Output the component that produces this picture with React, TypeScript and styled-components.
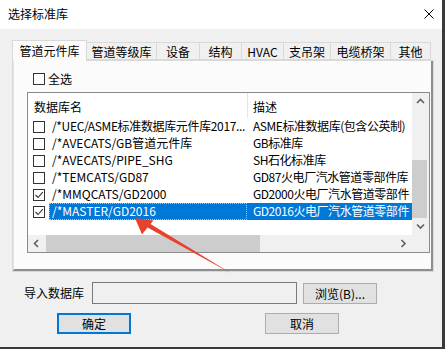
import React from 'react';
import styled, { createGlobalStyle } from 'styled-components';

const GlobalStyle = createGlobalStyle`
  html, body {
    margin: 0;
    padding: 0;
    background: #f0f0f0;
  }
  body {
    font-family: "Noto Sans CJK SC", "Noto Sans", sans-serif;
    font-size: 12px;
    color: #000;
  }
`;

const Window = styled.div`
  position: relative;
  width: 445px;
  height: 349px;
  box-sizing: border-box;
  background: #f0f0f0;
  border-right: 3px solid #3a3a3a;
  border-bottom: 2px solid #3a3a3a;
  overflow: hidden;
`;

const TitleBar = styled.div`
  height: 29px;
  background: #fff;
  display: flex;
  align-items: center;
  padding: 0 8px 2px 8px;
  box-sizing: border-box;
`;

const Title = styled.span`
  font-size: 12px;
  line-height: 14px;
`;

const CloseIcon = styled.svg`
  margin-left: auto;
  width: 10px;
  height: 10px;
`;

const Body = styled.div`
  padding: 11px 0 0 12px;
`;

const TabStrip = styled.div`
  display: flex;
  align-items: flex-end;
  height: 20px;
  position: relative;
  z-index: 1;
`;

const Tab = styled.div<{ $w: number; $active?: boolean }>`
  width: ${p => p.$w}px;
  height: ${p => (p.$active ? 21 : 18)}px;
  margin-right: -1px;
  margin-bottom: ${p => (p.$active ? -1 : 0)}px;
  box-sizing: border-box;
  border: 1px solid #d9d9d9;
  border-bottom: ${p => (p.$active ? 'none' : '1px solid #d9d9d9')};
  background: ${p => (p.$active ? '#fbfbfb' : '#f0f0f0')};
  position: relative;
  z-index: ${p => (p.$active ? 2 : 1)};
  display: flex;
  align-items: center;
  justify-content: center;
  padding-bottom: ${p => (p.$active ? 2 : 0)}px;
  font-size: 12px;
  white-space: nowrap;
`;

const TabPanel = styled.div`
  width: 422px;
  height: 212px;
  box-sizing: border-box;
  border: 1px solid #d9d9d9;
  background: #fbfbfb;
`;

const Page = styled.div`
  height: 100%;
  box-sizing: border-box;
  border-left: 1px solid #e2e2e2;
  border-right: 2px solid #8e8e8e;
  border-bottom: 2px solid #8e8e8e;
  padding: 12px 0 0 13px;
`;

const SelectAll = styled.label`
  display: flex;
  align-items: center;
  gap: 3px;
  height: 12px;
  margin: 0 0 7px 6px;
  line-height: 12px;
`;

const Box = styled.span`
  width: 12px;
  height: 12px;
  box-sizing: border-box;
  border: 1px solid #333;
  background: #fff;
  display: inline-flex;
  flex: none;
`;

const ListView = styled.div`
  width: 403px;
  height: 161px;
  box-sizing: border-box;
  border: 1px solid #8a8a8a;
  background: #fff;
  display: grid;
  grid-template-columns: 1fr 17px;
  grid-template-rows: 1fr 17px;
`;

const ListContent = styled.div`
  overflow: hidden;
`;

const Header = styled.div`
  display: flex;
  height: 25px;
`;

const HeaderCell = styled.div<{ $w?: number }>`
  ${p => (p.$w ? `width: ${p.$w}px; border-right: 1px solid #e5e5e5;` : 'flex: 1;')}
  padding-left: ${p => (p.$w ? 6 : 5)}px;
  box-sizing: border-box;
  display: flex;
  align-items: center;
  padding-top: 2px;
`;

const Row = styled.div`
  display: flex;
  height: 17px;
  align-items: center;
`;

const CheckCell = styled.div`
  width: 21px;
  padding-left: 5px;
  box-sizing: border-box;
  display: flex;
  align-items: center;
`;

const NameCell = styled.div<{ $sel?: boolean; $tight?: boolean }>`
  width: 198px;
  height: 17px;
  box-sizing: border-box;
  padding-left: 3px;
  white-space: nowrap;
  overflow: hidden;
  line-height: 16px;
  letter-spacing: ${p => (p.$tight ? '-0.35px' : '0')};
  background: ${p => (p.$sel ? '#0078d7' : 'transparent')};
  color: ${p => (p.$sel ? '#fff' : '#000')};
  outline: ${p => (p.$sel ? '1px dotted #9cc8ee' : 'none')};
  outline-offset: -1px;
`;

const DescCell = styled.div<{ $sel?: boolean }>`
  flex: 1;
  height: 17px;
  box-sizing: border-box;
  padding-left: 6px;
  white-space: nowrap;
  overflow: hidden;
  line-height: 16px;
  letter-spacing: -0.45px;
  background: ${p => (p.$sel ? '#0078d7' : 'transparent')};
  color: ${p => (p.$sel ? '#fff' : '#000')};
`;

const VScroll = styled.div`
  display: flex;
  flex-direction: column;
  background: #f0f0f0;
`;

const HScroll = styled.div`
  display: flex;
  background: #f0f0f0;
`;

const ArrowBtn = styled.div`
  width: 17px;
  height: 17px;
  flex: none;
  display: flex;
  align-items: center;
  justify-content: center;
`;

const VTrack = styled.div`
  flex: 1;
  display: flex;
  flex-direction: column;
  justify-content: flex-end;
`;

const VThumb = styled.div`
  height: 58px;
  margin: 0 2px 0 0;
  background: #cdcdcd;
`;

const HTrack = styled.div`
  flex: 1;
  display: flex;
  padding-left: 1px;
`;

const HThumb = styled.div`
  width: 214px;
  background: #cdcdcd;
`;

const Corner = styled.div`
  background: #f0f0f0;
`;

const ImportRow = styled.div`
  display: flex;
  align-items: center;
  margin-top: 10px;
  height: 22px;
`;

const FieldLabel = styled.span`
  width: 68px;
  margin-left: 12px;
  line-height: 14px;
`;

const PathInput = styled.div`
  width: 205px;
  height: 22px;
  box-sizing: border-box;
  border: 1px solid #7a7a7a;
  background: #f0f0f0;
`;

const Button = styled.div<{ $default?: boolean }>`
  width: 74px;
  height: 21px;
  box-sizing: border-box;
  border: ${p => (p.$default ? '2px solid #0078d7' : '1px solid #adadad')};
  background: #e1e1e1;
  display: flex;
  align-items: center;
  justify-content: center;
  font-size: 12px;
`;

const ButtonRow = styled.div`
  display: flex;
  margin: 9px 0 0 45px;
  gap: 134px;
`;

const BrowseButton = styled(Button)`
  margin-left: 6px;
`;

const Annotation = styled.svg`
  position: absolute;
  left: 0;
  top: 0;
  width: 445px;
  height: 349px;
  pointer-events: none;
`;

const Check = () => (
  <svg width="10" height="10" viewBox="0 0 10 10">
    <polyline points="1.5,5 4,7.5 8.8,2.2" fill="none" stroke="#333" strokeWidth="1.1" />
  </svg>
);

const Chevron = ({ dir }: { dir: 'up' | 'down' | 'left' | 'right' }) => {
  const pts = {
    up: '1,5 4.5,1.5 8,5',
    down: '1,1.5 4.5,5 8,1.5',
    left: '5,1 1.5,4.5 5,8',
    right: '1.5,1 5,4.5 1.5,8',
  }[dir];
  const vertical = dir === 'up' || dir === 'down';
  return (
    <svg width={vertical ? 9 : 7} height={vertical ? 7 : 9} viewBox={vertical ? '0 0 9 7' : '0 0 7 9'}>
      <polyline points={pts} fill="none" stroke="#606060" strokeWidth="1.6" />
    </svg>
  );
};

const tabs = [
  { label: '管道元件库', w: 75, active: true },
  { label: '管道等级库', w: 71 },
  { label: '设备', w: 44 },
  { label: '结构', w: 43 },
  { label: 'HVAC', w: 43 },
  { label: '支吊架', w: 48 },
  { label: '电缆桥架', w: 61 },
  { label: '其他', w: 41 },
];

const rows = [
  { name: '/*UEC/ASME标准数据库元件库2017...', desc: 'ASME标准数据库(包含公英制)', checked: false, tight: true },
  { name: '/*AVECATS/GB管道元件库', desc: 'GB标准库', checked: false },
  { name: '/*AVECATS/PIPE_SHG', desc: 'SH石化标准库', checked: false },
  { name: '/*TEMCATS/GD87', desc: 'GD87火电厂汽水管道零部件库', checked: false },
  { name: '/*MMQCATS/GD2000', desc: 'GD2000火电厂汽水管道零部件', checked: true },
  { name: '/*MASTER/GD2016', desc: 'GD2016火电厂汽水管道零部件', checked: true, selected: true },
];

export default function App() {
  return (
    <>
      <GlobalStyle />
      <Window>
        <TitleBar>
          <Title>选择标准库</Title>
          <CloseIcon viewBox="0 0 10 10">
            <path d="M0.5 0.5 L9.5 9.5 M9.5 0.5 L0.5 9.5" stroke="#000" strokeWidth="1" />
          </CloseIcon>
        </TitleBar>
        <Body>
          <TabStrip>
            {tabs.map(t => (
              <Tab key={t.label} $w={t.w} $active={t.active}>
                {t.label}
              </Tab>
            ))}
          </TabStrip>
          <TabPanel>
            <Page>
              <SelectAll>
                <Box />
                全选
              </SelectAll>
              <ListView>
                <ListContent>
                  <Header>
                    <HeaderCell $w={220}>数据库名</HeaderCell>
                    <HeaderCell>描述</HeaderCell>
                  </Header>
                  {rows.map(r => (
                    <Row key={r.name}>
                      <CheckCell>
                        <Box>{r.checked && <Check />}</Box>
                      </CheckCell>
                      <NameCell $sel={r.selected} $tight={r.tight}>{r.name}</NameCell>
                      <DescCell $sel={r.selected}>{r.desc}</DescCell>
                    </Row>
                  ))}
                </ListContent>
                <VScroll>
                  <ArrowBtn><Chevron dir="up" /></ArrowBtn>
                  <VTrack>
                    <VThumb />
                  </VTrack>
                  <ArrowBtn><Chevron dir="down" /></ArrowBtn>
                </VScroll>
                <HScroll>
                  <ArrowBtn><Chevron dir="left" /></ArrowBtn>
                  <HTrack>
                    <HThumb />
                  </HTrack>
                  <ArrowBtn><Chevron dir="right" /></ArrowBtn>
                </HScroll>
                <Corner />
              </ListView>
            </Page>
          </TabPanel>
          <ImportRow>
            <FieldLabel>导入数据库</FieldLabel>
            <PathInput />
            <BrowseButton>浏览(B)...</BrowseButton>
          </ImportRow>
          <ButtonRow>
            <Button $default>确定</Button>
            <Button>取消</Button>
          </ButtonRow>
        </Body>
        <Annotation viewBox="0 0 445 349">
          <polygon
            points="135,218 153.5,220.5 150.5,224 231.5,273.5 147.5,227.5 142,234.5"
            fill="#e8412c"
          />
        </Annotation>
      </Window>
    </>
  );
}
